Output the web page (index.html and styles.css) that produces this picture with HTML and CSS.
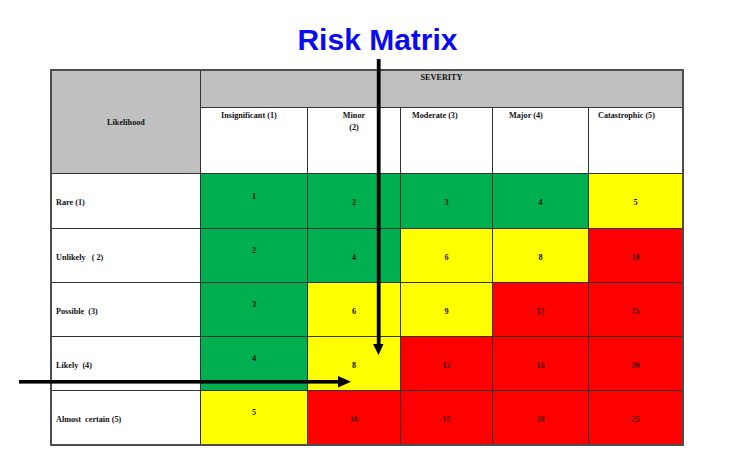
FILE: index.html
```html
<!DOCTYPE html>
<html>
<head>
<meta charset="utf-8">
<title>Risk Matrix</title>
<link rel="stylesheet" href="styles.css">
</head>
<body>
<div class="page">
  <h1 class="title">Risk Matrix</h1>
  <div class="matrix">
    <div class="cell corner">Likelihood</div>
    <div class="cell band">SEVERITY</div>
    <div class="cell sev sev1">Insignificant (1)</div>
    <div class="cell sev sev2">Minor<br>(2)</div>
    <div class="cell sev sev3">Moderate (3)</div>
    <div class="cell sev sev4">Major (4)</div>
    <div class="cell sev sev5 last">Catastrophic (5)</div>

    <div class="cell label">Rare (1)</div>
    <div class="cell num first g">1</div>
    <div class="cell num g">2</div>
    <div class="cell num g">3</div>
    <div class="cell num g">4</div>
    <div class="cell num y last">5</div>

    <div class="cell label">Unlikely&nbsp;&nbsp; ( 2)</div>
    <div class="cell num first g">2</div>
    <div class="cell num g">4</div>
    <div class="cell num y">6</div>
    <div class="cell num y">8</div>
    <div class="cell num r last">10</div>

    <div class="cell label">Possible&nbsp; (3)</div>
    <div class="cell num first g">3</div>
    <div class="cell num y">6</div>
    <div class="cell num y">9</div>
    <div class="cell num r">12</div>
    <div class="cell num r last">15</div>

    <div class="cell label">Likely&nbsp; (4)</div>
    <div class="cell num first g">4</div>
    <div class="cell num y">8</div>
    <div class="cell num r">12</div>
    <div class="cell num r">16</div>
    <div class="cell num r last">20</div>

    <div class="cell label bottom">Almost&nbsp; certain (5)</div>
    <div class="cell num first y bottom">5</div>
    <div class="cell num r bottom">10</div>
    <div class="cell num r bottom">15</div>
    <div class="cell num r bottom">20</div>
    <div class="cell num r last bottom">25</div>
  </div>
  <svg class="arrows" width="750" height="459" viewBox="0 0 750 459">
    <rect x="376.8" y="59" width="3.8" height="288" fill="#000"/>
    <polygon points="373,344 383.5,344 378.5,355" fill="#000"/>
    <rect x="19" y="380" width="321" height="3.6" fill="#000"/>
    <polygon points="338,376 338,387.5 351,381.8" fill="#000"/>
  </svg>
</div>
</body>
</html>
```
FILE: styles.css
```css
html, body {
  margin: 0;
  padding: 0;
  background: #fff;
}

.page {
  position: relative;
  width: 750px;
  height: 459px;
  overflow: hidden;
}

.title {
  margin: 23px 0 0 0;
  padding-left: 5px;
  height: 34px;
  line-height: 34px;
  text-align: center;
  font-family: "Liberation Sans", Arial, sans-serif;
  font-weight: bold;
  font-size: 30px;
  color: #0b0bf2;
}

.matrix {
  margin: 12px 0 0 50px;
  width: 634px;
  box-sizing: border-box;
  display: grid;
  grid-template-columns: 149px 107px 93px 92px 96px 93px;
  grid-template-rows: 37px 66px 55px 54px 54px 54px 53px;
  border: 2px solid #4d4d4d;
  font-family: "Liberation Serif", "Times New Roman", serif;
  font-weight: bold;
  font-size: 8.2px;
  line-height: 12px;
  color: #111;
}

.cell {
  box-sizing: border-box;
  border-right: 1px solid #333;
  border-bottom: 1px solid #333;
}

.cell.last {
  border-right: none;
}

.cell.bottom {
  border-bottom: none;
}

.corner {
  grid-row: 1 / span 2;
  background: #c0c0c0;
  display: flex;
  align-items: center;
  justify-content: center;
  padding-top: 2px;
}

.band {
  grid-column: 2 / span 5;
  background: #c0c0c0;
  border-right: none;
  text-align: center;
  padding-top: 1px;
}

.sev {
  background: #fff;
  padding-top: 2px;
}

.sev1 { padding-left: 20px; }
.sev2 { text-align: center; }
.sev3 { padding-left: 11px; }
.sev4 { padding-left: 16px; }
.sev5 { padding-left: 9px; }

.label {
  background: #fff;
  display: flex;
  align-items: center;
  padding: 4px 0 0 4px;
  white-space: nowrap;
}

.num {
  display: flex;
  align-items: center;
  justify-content: center;
  padding-top: 4px;
}

.num.first {
  padding-top: 0;
  padding-bottom: 9px;
}

.g { background: #00b050; }
.y { background: #ffff00; }
.r { background: #ff0000; color: #4a0000; }

.arrows {
  position: absolute;
  left: 0;
  top: 0;
}
```
